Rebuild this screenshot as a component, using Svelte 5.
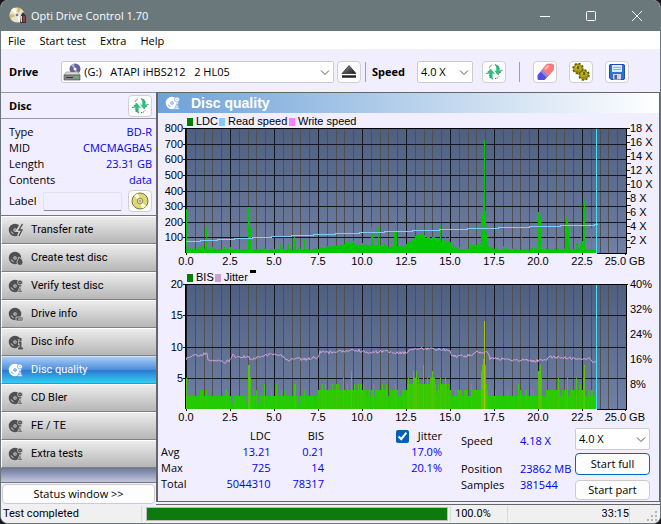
<script lang="ts">
  type Spike = [number, number];

  const menu = ['File', 'Start test', 'Extra', 'Help'];

  const info = [
    ['Type', 'BD-R'],
    ['MID', 'CMCMAGBA5'],
    ['Length', '23.31 GB'],
    ['Contents', 'data'],
  ];

  const tests = [
    { name: 'Transfer rate', badge: 'bolt' },
    { name: 'Create test disc', badge: 'flame' },
    { name: 'Verify test disc', badge: 'search' },
    { name: 'Drive info', badge: 'drive' },
    { name: 'Disc info', badge: 'info' },
    { name: 'Disc quality', badge: 'search' },
    { name: 'CD Bler', badge: 'search' },
    { name: 'FE / TE', badge: 'search' },
    { name: 'Extra tests', badge: 'search' },
  ];

  let active = $state('Disc quality');
  let jitterOn = $state(true);

  // plot area inside each chart's viewBox
  const LEFT = 28;
  const TOP = 15;
  const W = 441;
  const H = 125;
  const END = 411;

  function noise(i: number) {
    const n = Math.sin(i * 127.1 + 11.7) * 43758.5453;
    return n - Math.floor(n);
  }

  function lerp(points: Spike[], x: number) {
    for (let i = 1; i < points.length; i++) {
      const [x0, y0] = points[i - 1];
      const [x1, y1] = points[i];
      if (x <= x1) return y0 + ((y1 - y0) * (x - x0)) / (x1 - x0);
    }
    return points[points.length - 1][1];
  }

  const ldcBase: Spike[] = [
    [0, 3], [132, 3], [136, 5], [150, 6], [162, 9], [175, 7], [200, 6], [218, 6], [228, 13], [234, 16],
    [240, 13], [250, 13], [254, 10], [263, 10], [268, 5], [274, 3], [283, 3], [286, 7], [301, 7], [307, 3], [411, 3],
  ];
  const ldcSpikes: Spike[] = [
    [0, 44], [15, 7], [16, 7], [20, 26], [26, 6], [62, 46], [63, 46], [64, 26], [94, 9], [102, 9], [108, 16],
    [109, 12], [118, 14], [163, 14], [185, 26], [186, 20], [192, 26], [208, 22], [209, 34], [210, 22], [221, 14],
    [254, 28], [259, 27], [263, 28], [284, 10], [295, 38], [296, 40], [297, 61], [298, 113], [299, 42], [300, 20],
    [335, 26], [352, 41], [353, 41], [354, 36], [369, 25], [379, 20], [380, 35], [381, 33], [382, 25], [383, 11],
    [390, 10], [391, 13], [394, 8], [395, 26], [396, 12], [397, 38], [398, 52], [405, 25], [410, 5],
  ];
  const bisSpikes: Spike[] = [
    [0, 5], [14, 3], [16, 3], [20, 3], [39, 3], [40, 3], [62, 7], [63, 7], [64, 5], [67, 3], [70, 3], [78, 4],
    [85, 3], [90, 4], [95, 3], [98, 3], [108, 4], [109, 4], [118, 3], [146, 4], [150, 4], [157, 5], [161, 4],
    [165, 6], [168, 4], [172, 4], [175, 4], [187, 4], [196, 4], [200, 4], [209, 4], [222, 5], [227, 6], [230, 6],
    [237, 7], [246, 6], [259, 5], [262, 4], [285, 4], [295, 6], [296, 7], [297, 8], [298, 14], [299, 7], [300, 4],
    [305, 3], [332, 4], [340, 3], [352, 6], [353, 6], [354, 7], [355, 5], [372, 5], [379, 4], [381, 5], [390, 5],
    [394, 4], [397, 5], [398, 7], [405, 3], [410, 3],
  ];
  const jitterPoints: Spike[] = [
    [0, 292], [8, 277], [13, 284], [19, 274], [21, 274], [22, 292], [25, 299], [30, 295], [40, 300], [45, 293],
    [47, 280], [52, 287], [60, 283], [66, 292], [72, 283], [80, 280], [88, 276], [97, 282], [101, 294], [108, 290],
    [118, 292], [132, 286], [134, 270], [145, 271], [155, 268], [166, 262], [174, 266], [180, 272], [190, 270],
    [200, 268], [210, 271], [220, 273], [228, 260], [250, 260], [263, 265], [267, 282], [285, 281], [289, 270],
    [302, 272], [304, 288], [320, 292], [350, 297], [360, 292], [364, 285], [390, 289], [404, 290], [407, 301], [410, 298],
  ];

  const ldc = Array.from({ length: END }, (_, i) => {
    const base = lerp(ldcBase, i);
    const r = noise(i);
    return Math.round(base + r * (base > 8 ? 4 : 1.6) + (noise(i + 900) > 0.93 ? 2 : 0));
  });
  for (const [x, h] of ldcSpikes) ldc[x] = h;

  function bisLevel(i: number) {
    const r = noise(i + 300);
    if (i < 132) return r > 0.94 && i > 40 ? 1 : 2;
    if (i < 180) return r > 0.85 ? 4 : 3;
    if (i < 221) return r > 0.4 ? 3 : 2;
    if (i < 226) return 4;
    if (i < 249) return r > 0.55 ? 5 : 4;
    if (i < 264) return r > 0.8 ? 5 : r > 0.4 ? 4 : 3;
    if (i < 285) return r > 0.6 ? 3 : 2;
    if (i < 302) return 3;
    if (i < 360) return r > 0.86 ? 3 : 2;
    if (i < 374) return 3;
    return r > 0.5 ? 3 : 2;
  }
  const bis = Array.from({ length: END }, (_, i) => bisLevel(i));
  for (const [x, h] of bisSpikes) bis[x] = h;

  const bars = (values: number[]) =>
    values.map((h, i) => `M${LEFT + i} ${TOP + H}v${-h}h1v${h}z`).join('');

  function bisColor(level: number) {
    if (level > 10) return '#aebe00';
    return `rgb(${12 + level * 11}, ${205 - level}, 4)`;
  }
  const bisLevels = [...new Set(bis)].map((level) => ({
    level,
    d: bis
      .map((v, i) => (v === level ? `M${LEFT + i} ${TOP + H}v${-Math.round(v * 6.25)}h1v${Math.round(v * 6.25)}z` : ''))
      .join(''),
  }));

  const jitter = Array.from({ length: END }, (_, i) => {
    const y = (lerp(jitterPoints, i) - 66) / 3 + TOP + (noise(i * 3) - 0.5) * 3;
    return `${i ? 'L' : 'M'}${LEFT + i} ${y.toFixed(1)}`;
  }).join('');

  // read speed climbs one pixel at each of these offsets
  const steps = [14, 31, 48, 66, 85, 105, 127, 149, 173, 198, 226, 253, 281, 312, 343, 374, 408, 411];
  const readSpeed = `M${LEFT} 128.5` + steps.map((x) => `H${LEFT + x}v-1`).join('');

  const xLabels = ['0.0', '2.5', '5.0', '7.5', '10.0', '12.5', '15.0', '17.5', '20.0', '22.5'];
  const minor = Array.from({ length: 50 }, (_, i) => i).filter((i) => i % 5);
  const major = Array.from({ length: 10 }, (_, i) => i);
</script>

{#snippet disc(badge: string)}
  <svg class="disc" width="16" height="16" viewBox="0 0 16 16" fill="none" stroke="currentColor">
    <circle cx="7" cy="8" r="4" stroke-width="4.500" />
    <circle cx="7" cy="8" r=".8" fill="currentColor" stroke="none" />
    <path d="M3.2 9.500A4 4 0 0 0 5.600 11.800" class="shine" />
    {#if badge === 'bolt'}
      <path d="M14 2l-3.500 6h3l-2.500 6" class="cut" stroke-width="4" />
      <path d="M14.500 2l-3.500 6h3l-3 6" stroke-width="1.400" />
    {:else if badge === 'flame'}
      <path d="M11 7c3 2 4 3.500 4 5.500a3 3 0 0 1-6 0c0-2 1-2.500 2-5.500z" fill="currentColor" class="edge" />
    {:else if badge === 'drive'}
      <path d="M8 11h7v4H8z" class="edge" fill="currentColor" />
      <path d="M10 13h4" class="shine" />
    {:else if badge === 'info'}
      <path d="M10 9h3v5h2M9.500 14.500H15M12.500 5v2" class="cut" stroke-width="4" />
      <path d="M10.500 8.500h2v6M10 14.500h5M12.500 4v3" stroke-width="2" />
    {:else}
      <circle cx="12" cy="4.500" r="2.500" fill="currentColor" class="edge" />
      <path d="M9.500 14.500l2.500-6 2.500 6z" fill="currentColor" class="edge" />
      <path d="M12 4v1M12 11.500v2" class="shine" />
    {/if}
  </svg>
{/snippet}

{#snippet refresh()}
  <svg width="18" height="18" viewBox="0 0 18 18">
    <path d="M6 6l4 5-2.500-.5Q7 14 8.500 16.500 4.500 15 4.500 10.500L1.500 11z" fill="#2fc07c" />
    <path d="M13 12l-4-4.500 2.500.5Q12 4 9.500 1.500 14.500 2.500 14.500 7.500L17 7z" fill="#2fc07c" />
    <path d="M5.500 7v8M12.500 2.500V11" stroke="#2fc07c" stroke-width="2" />
    <path d="M1 11l5-5.500M5 12q.5 3 3 4.500M10 1.500q4 1 4.500 5.500M17.500 7L13 12" fill="none" stroke="#3b5f50" stroke-width=".8" stroke-dasharray="1.500 1" />
    <path d="M4.500 4.500q.5-2 3-2.500M10 15.500q3 0 4-2" fill="none" stroke="#333" stroke-dasharray="1 1" />
  </svg>
{/snippet}

{#snippet chevron()}
  <svg class="chevron" width="10" height="6" viewBox="0 0 10 6" fill="none" stroke="#555">
    <path d="M1 .5l4 4 4-4" />
  </svg>
{/snippet}

{#snippet grid(rows: number)}
  <rect x={LEFT} y={TOP} width={W} height={H} fill="url(#sky)" />
  <g shape-rendering="crispEdges">
    {#each minor as i}
      <rect x={LEFT + Math.round(i * 8.8)} y={TOP} width="1" height={H} fill="#505050" />
    {/each}
    {#each major as i}
      <rect x={LEFT + i * 44} y={TOP} width="1" height={H} fill="#15171c" />
    {/each}
    {#each Array(rows) as _, i}
      <rect x={LEFT - 3} y={TOP + Math.round((i * H) / rows)} width={i ? W + 3 : 3} height="1" fill="#15171c" />
    {/each}
  </g>
{/snippet}

{#snippet frame()}
  <g shape-rendering="crispEdges">
    <rect x={LEFT + 410} y={TOP} width="1" height={H} fill="#40e0ff" />
    <path d="M27.500 140V15M27 15.500H470M468.500 15V141M439 140.500H469" fill="none" stroke="#000" />
    {#each [...major, 10] as i}
      <rect x={LEFT + i * 44 - (i === 10 ? 1 : 0)} y={TOP + H} width="1" height="2" fill="#000" />
    {/each}
  </g>
  {#each xLabels as label, i}
    <text x={LEFT + i * 44} y="152" text-anchor="middle">{label}</text>
  {/each}
  <text x="487" y="152" text-anchor="end">25.0 GB</text>
{/snippet}

<div class="window">
  <header class="titlebar">
    <svg width="18" height="18" viewBox="0 0 18 18">
      <circle cx="8" cy="8" r="7.500" fill="#e9e1c8" />
      <path d="M8 8L2 3a8 8 0 0 1 4-2.500zM8 8l6 5a8 8 0 0 1-4 2.500z" fill="#fffdf2" />
      <path d="M8 8L.5 7a8 8 0 0 0 1 4.500z" fill="#d6bc6e" />
      <path d="M8 8l1-7.500 3 1.200z" fill="#d2b46a" />
      <circle cx="8" cy="8" r="2" fill="#777" stroke="#fff" />
      <path d="M11 16l1-8 2-3 3 4v7z" fill="#343238" />
      <path d="M15 9v6" stroke="#a33b36" stroke-width="2" />
      <path d="M12.500 9v6" stroke="#ddd" />
    </svg>
    <h1>Opti Drive Control 1.70</h1>
    <div class="caption">
      <button aria-label="Minimize"><svg width="12" height="12" viewBox="0 0 12 12"><path d="M1 6.500h10" /></svg></button>
      <button aria-label="Maximize"><svg width="12" height="12" viewBox="0 0 12 12"><rect x="1.500" y="1.500" width="9" height="9" rx="1" /></svg></button>
      <button aria-label="Close"><svg width="12" height="12" viewBox="0 0 12 12"><path d="M1 1l10 10M11 1L1 11" /></svg></button>
    </div>
  </header>

  <nav class="menu">
    {#each menu as item}
      <button>{item}</button>
    {/each}
  </nav>

  <div class="toolbar">
    <label class="strong" for="drive">Drive</label>
    <span class="combo drive">
      <svg class="drive-icon" width="18" height="18" viewBox="0 0 18 18">
        <circle cx="12" cy="6" r="5.500" fill="#66609a" />
        <path d="M12 6l-4-3.500A5.500 5.500 0 0 1 11 .6zM12 6l4 4a5.500 5.500 0 0 1-3 1.400z" fill="#b6b0e4" />
        <circle cx="12" cy="6" r="1.500" fill="#fff" />
        <path d="M3 9h12l2 3H1z" fill="#dcdcdc" stroke="#777" stroke-width=".5" />
        <path d="M1 12h16v5H1z" fill="#8b8b8b" stroke="#444" stroke-width=".6" />
        <path d="M3 14.500h7" stroke="#333" />
        <path d="M12 14h3" stroke="#2edc3c" stroke-width="2" />
      </svg>
      <select id="drive"><option>(G:)&nbsp;&nbsp; ATAPI iHBS212&nbsp;&nbsp; 2 HL05</option></select>
      {@render chevron()}
    </span>
    <button class="tool eject" aria-label="Eject">
      <svg width="18" height="16" viewBox="0 0 18 16">
        <defs><linearGradient id="metal" x2="1" y2="1"><stop stop-color="#999" /><stop offset="1" stop-color="#111" /></linearGradient></defs>
        <path d="M9 1.500L16 9.500H2z" fill="url(#metal)" stroke="#222" stroke-width=".7" />
        <path d="M2 12.500h14" stroke="#222" stroke-width="2.500" />
      </svg>
    </button>
    <span class="sep"></span>
    <label class="strong" for="speed">Speed</label>
    <span class="combo speed">
      <select id="speed"><option>4.0 X</option></select>
      {@render chevron()}
    </span>
    <button class="tool" aria-label="Refresh">{@render refresh()}</button>
    <span class="sep wide"></span>
    <div class="group">
      <button class="tool" aria-label="Erase">
        <svg width="18" height="18" viewBox="0 0 18 18">
          <path d="M6 7l4.500-5.500q.5-.5 1.500-.5h4q1.500 0 1.500 1.500V6q0 1-.5 1.500L12 13z" fill="#ff7b7b" stroke="#b86a6a" stroke-width=".6" />
          <path d="M6 7l6 6-3 3.500q-.5.500-1.500.5H3q-1.500 0-1.500-1.500V13q0-1 .5-1.500z" fill="#554ce0" />
          <path d="M6 7l6 6-1.500 1.500-6-6z" fill="#8f88f0" />
          <path d="M9 6.500l3.500-4" stroke="#ffb4b4" stroke-width="2" />
        </svg>
      </button>
      <button class="tool" aria-label="Options">
        <svg width="18" height="18" viewBox="0 0 18 18" fill="none">
          <circle cx="6" cy="5.500" r="4.500" stroke="#5e5a05" stroke-width="2.500" stroke-dasharray="2 1.500" />
          <circle cx="12" cy="12" r="4.500" stroke="#5e5a05" stroke-width="2.500" stroke-dasharray="2 1.500" />
          <circle cx="6" cy="5.500" r="4.300" fill="#b5a90c" stroke="#6f6906" stroke-width=".8" />
          <circle cx="12" cy="12" r="4.300" fill="#b5a90c" stroke="#6f6906" stroke-width=".8" />
          <path d="M3.500 4.500Q4.500 3 6.500 3M9.500 11q1-1.500 3-1.500" stroke="#e0d648" />
          <path d="M6 3v3M12 9v3" stroke="#4a4600" stroke-width="1.500" />
          <path d="M4 8q2 1 4-.5M10.500 14.500q2 .5 4-1" stroke="#857d06" />
        </svg>
      </button>
      <button class="tool" aria-label="Save">
        <svg width="18" height="18" viewBox="0 0 18 18">
          <path d="M2 1.500h14l.5.5v14l-.5.500H3L1.500 15V2z" fill="#2f6fe0" stroke="#1c4faf" />
          <path d="M4 2h10v7H4z" fill="#dfeaff" />
          <path d="M5 4.500h8M5 6.500h8" stroke="#8fb0e8" />
          <path d="M5 11h8v5.500H5z" fill="#d6d6d6" />
          <path d="M6.500 12H9v4H6.500z" fill="#555f75" />
        </svg>
      </button>
    </div>
  </div>

  <div class="body">
    <aside>
      <div class="disc-head">
        <h2>Disc</h2>
        <button class="tool" aria-label="Reload disc">{@render refresh()}</button>
      </div>
      <dl class="info">
        {#each info as [key, value]}
          <div><dt>{key}</dt><dd>{value}</dd></div>
        {/each}
      </dl>
      <div class="disc-label">
        <label for="label">Label</label>
        <input id="label" type="text" />
        <button class="tool" aria-label="Write label">
          <svg width="18" height="18" viewBox="0 0 18 18">
            <circle cx="9" cy="9" r="8" fill="#e0d878" stroke="#76733c" />
            <path d="M9 9L3 4a8 8 0 0 1 4-2.500zM9 9l6 5a8 8 0 0 1-4 2.500z" fill="#fdfbd8" />
            <circle cx="9" cy="9" r="2.800" fill="#f2efbf" stroke="#8c894c" />
            <circle cx="9" cy="9" r="1" fill="#fff" stroke="#555" stroke-width=".6" />
          </svg>
        </button>
      </div>
      <nav class="tests">
        {#each tests as test}
          <button class:active={active === test.name} onclick={() => (active = test.name)}>
            {@render disc(test.badge)}
            {test.name}
          </button>
        {/each}
      </nav>
      <div class="filler"></div>
      <button class="push status-toggle">Status window &gt;&gt;</button>
    </aside>

    <main>
      <div class="panel">
        <div class="panel-head">
          {@render disc('search')}
          <h2>Disc quality</h2>
        </div>

        <svg class="chart" viewBox="0 0 501 156" role="img" aria-label="LDC and read speed">
          <defs>
            <linearGradient id="sky" x2="0" y2="1">
              <stop stop-color="#4f5f80" />
              <stop offset="1" stop-color="#7080a4" />
            </linearGradient>
          </defs>
          {@render grid(8)}
          <path d={bars(ldc)} fill="#00c800" shape-rendering="crispEdges" />
          <path d={readSpeed} fill="none" stroke="#80ccff" shape-rendering="crispEdges" />
          {@render frame()}
          {#each Array(8) as _, i}
            <text x="25" y={19 + Math.round(i * 15.625)} text-anchor="end">{800 - i * 100}</text>
          {/each}
          {#each Array(9) as _, i}
            <text x="472" y={19 + i * 14}>{18 - i * 2} X</text>
          {/each}
          {#each Array(18) as _, i}
            <rect x="469" y={15 + i * 7} width={i % 2 ? 4 : 3} height="1" fill="#222" shape-rendering="crispEdges" />
          {/each}
          <rect x="29" y="5" width="6" height="8" fill="#008000" />
          <text x="38" y="12">LDC</text>
          <rect x="61" y="5" width="6" height="8" fill="#80ccff" />
          <text x="70" y="12">Read speed</text>
          <rect x="131" y="5" width="6" height="8" fill="#ff80ff" />
          <text x="140" y="12">Write speed</text>
        </svg>

        <svg class="chart" viewBox="0 0 501 156" role="img" aria-label="BIS and jitter">
          {@render grid(4)}
          {#each bisLevels as { level, d }}
            <path {d} fill={bisColor(level)} shape-rendering="crispEdges" />
          {/each}
          {#if jitterOn}
            <path d={jitter} fill="none" stroke="#d0a0d0" />
          {/if}
          {@render frame()}
          {#each Array(4) as _, i}
            <text x="25" y={19 + Math.round(i * 31.25)} text-anchor="end">{20 - i * 5}</text>
          {/each}
          {#each Array(5) as _, i}
            <text x="472" y={19 + i * 25}>{40 - i * 8}%</text>
          {/each}
          <rect x="29" y="5" width="6" height="8" fill="#008000" />
          <text x="38" y="12">BIS</text>
          <rect x="57" y="5" width="6" height="8" fill="#d0a0d0" />
          <text x="66" y="12">Jitter</text>
          <rect x="92" y="1" width="6" height="3" fill="#000" />
        </svg>

        <div class="results">
          <table>
            <thead>
              <tr>
                <td></td>
                <th>LDC</th>
                <th>BIS</th>
                <th><label><input type="checkbox" bind:checked={jitterOn} />Jitter</label></th>
              </tr>
            </thead>
            <tbody>
              <tr><th>Avg</th><td>13.21</td><td>0.21</td><td>17.0%</td></tr>
              <tr><th>Max</th><td>725</td><td>14</td><td>20.1%</td></tr>
              <tr><th>Total</th><td>5044310</td><td>78317</td><td></td></tr>
            </tbody>
          </table>
          <dl class="position">
            <dt class="first">Speed</dt><dd class="first">4.18 X</dd>
            <dt>Position</dt><dd>23862 MB</dd>
            <dt>Samples</dt><dd>381544</dd>
          </dl>
          <div class="actions">
            <span class="combo">
              <select aria-label="Test speed"><option>4.0 X</option></select>
              {@render chevron()}
            </span>
            <button class="push default">Start full</button>
            <button class="push">Start part</button>
          </div>
        </div>
      </div>
    </main>
  </div>

  <footer>
    <span class="message">Test completed</span>
    <progress max="100" value="100" aria-label="Progress"></progress>
    <span class="percent">100.0%</span>
    <span class="time">33:15</span>
    <svg class="grip" width="10" height="10" viewBox="0 0 10 10" fill="#b4b4b4">
      <path d="M8 0h2v2H8zM4 4h2v2H4zM8 4h2v2H8zM0 8h2v2H0zM4 8h2v2H4zM8 8h2v2H8z" />
    </svg>
  </footer>
</div>

<style>
  :global(body) {
    background: #15171a;
  }

  .window {
    min-height: 100vh;
    box-sizing: border-box;
    display: flex;
    flex-direction: column;
    border: 1px solid #6a787c;
    border-top: 0;
    border-radius: 8px;
    overflow: hidden;
    background: #f0eeff;
    color: #000;
    font: 11px/16px "Open Sans", "Noto Sans", sans-serif;
  }

  button, select, input {
    font: inherit;
    color: inherit;
  }

  button {
    padding: 0;
    border: 0;
    background: none;
  }

  h1, h2, dl, dd {
    margin: 0;
    font-size: inherit;
  }

  .titlebar {
    height: 31px;
    display: flex;
    align-items: center;
    gap: 4px;
    padding-left: 8px;
    background: #6a787c;
    color: #fff;
  }

  h1 {
    flex: 1;
    font-weight: 400;
  }

  .caption {
    display: flex;
  }

  .caption button {
    width: 46px;
    height: 31px;
    display: grid;
    place-items: center;
  }

  .caption svg {
    fill: none;
    stroke: #fff;
  }

  .menu {
    height: 19px;
    box-sizing: border-box;
    display: flex;
    align-items: center;
    gap: 14px;
    padding: 2px 0 0 7px;
    background: #fff;
    border-bottom: 1px solid #f0f0f0;
  }

  .toolbar {
    height: 42px;
    display: flex;
    align-items: center;
    padding: 2px 31px 0 8px;
    box-sizing: border-box;
  }

  .strong, .disc-head h2 {
    font-weight: 700;
  }

  .combo {
    position: relative;
    display: block;
  }

  .combo select {
    appearance: none;
    width: 100%;
    height: 22px;
    display: block;
    padding: 0 20px 0 3px;
    border: 1px solid #ccc;
    border-radius: 2px;
    background: #fff;
  }

  .chevron {
    position: absolute;
    right: 4px;
    top: 9px;
    pointer-events: none;
  }

  .drive {
    flex: 1;
    margin-left: 23px;
  }

  .drive select {
    padding-left: 22px;
  }

  .drive-icon {
    position: absolute;
    left: 2px;
    top: 2px;
  }

  .speed {
    width: 56px;
    margin: 0 9px 0 12px;
  }

  .tool {
    flex: none;
    width: 24px;
    height: 22px;
    display: grid;
    place-items: center;
    border: 1px solid #d0d0d0;
    border-radius: 4px;
    background: #fdfdfd;
  }

  .eject {
    margin-left: 3px;
  }

  .sep {
    width: 1px;
    height: 20px;
    margin: 0 6px 0 4px;
    background: #a0a0a0;
  }

  .sep.wide {
    margin: 0 13px;
  }

  .group {
    display: flex;
    gap: 12px;
  }

  .body {
    flex: 1;
    display: flex;
  }

  aside {
    flex: none;
    width: 155px;
    display: flex;
    flex-direction: column;
    border-top: 1px solid #999;
  }

  .disc-head {
    height: 25px;
    display: flex;
    align-items: center;
    justify-content: space-between;
    padding: 0 4px 0 8px;
    border-bottom: 1px solid #999;
  }

  .info {
    padding: 5px 4px 2px 8px;
  }

  .info div {
    display: flex;
    justify-content: space-between;
  }

  dd {
    color: #0000f0;
  }

  .disc-label {
    display: flex;
    align-items: center;
    padding: 0 4px 3px 8px;
    border-bottom: 1px solid #777;
  }

  .disc-label input {
    flex: 1;
    min-width: 0;
    box-sizing: border-box;
    height: 19px;
    margin: 0 6px;
    border: 1px solid #e0e0e8;
    border-bottom-color: #888;
    border-radius: 2px;
    background: #f0eeff;
  }

  .tests button {
    width: 100%;
    height: 28px;
    box-sizing: border-box;
    display: flex;
    align-items: center;
    gap: 7px;
    padding-left: 6px;
    border-top: 1px solid #fff;
    border-bottom: 1px solid #808080;
    border-left: 1px solid #fff;
    background: linear-gradient(#ececec, #b6b6b6);
    font-family: Roboto, sans-serif;
    --cut: #d4d4d4;
  }

  .disc {
    color: #505050;
  }

  .shine {
    stroke: var(--cut);
    stroke-width: 1;
  }

  .cut {
    stroke: var(--cut);
  }

  .edge {
    stroke: var(--cut);
    stroke-width: 0.8;
  }

  .tests .active {
    color: #fff;
    background: linear-gradient(#a8ccf4, #4a8cdc 50%, #2f78d0 51%, #30d0f8);
    border-top-color: #cfe4fa;
    --cut: #6a9fe0;
  }

  .tests .active .disc {
    color: #fff;
  }

  .filler {
    flex: 1;
    min-height: 12px;
    border-bottom: 1px solid #777;
    background: linear-gradient(#6a7899, #c2c6dc);
  }

  .push {
    height: 22px;
    border: 1px solid #ccc;
    border-radius: 4px;
    background: #fdfdfd;
  }

  .status-toggle {
    height: 20px;
    margin: 1px;
  }

  main {
    flex: 1;
    min-width: 0;
    border-bottom: 1px solid #666;
    padding-bottom: 2px;
    display: flex;
  }

  .panel {
    flex: 1;
    min-width: 0;
    border: solid #666;
    border-width: 1px 1px 1px 2px;
  }

  .panel-head {
    height: 20px;
    display: flex;
    align-items: center;
    gap: 10px;
    padding-left: 7px;
    color: #fff;
    background: linear-gradient(90deg, #6ea2d8, #fff);
    --cut: #7aabdc;
  }

  .panel-head h2 {
    font: bold 14px/20px "Liberation Sans", Arial, sans-serif;
  }

  .panel-head .disc {
    color: #fff;
  }

  .chart {
    display: block;
    width: 100%;
    height: auto;
    font: 11px "Liberation Sans", Arial, sans-serif;
  }

  .results {
    display: flex;
    padding: 3px 9px 0 3px;
  }

  table {
    flex: 1;
    table-layout: fixed;
    border-collapse: collapse;
    height: 64px;
    text-align: right;
  }

  th, td {
    padding: 0;
    font-weight: 400;
  }

  tbody th {
    text-align: left;
  }

  thead td {
    width: 20%;
  }

  thead th {
    width: 19%;
  }

  thead th:last-child {
    width: 42%;
  }

  tbody td {
    color: #0000f0;
  }

  table label {
    display: flex;
    align-items: center;
    justify-content: flex-end;
    gap: 9px;
  }

  table input {
    width: 13px;
    height: 13px;
    margin: 0;
    accent-color: #005fb8;
  }

  .position {
    flex: none;
    width: 114px;
    display: grid;
    grid-template-columns: 59px 1fr;
    align-content: start;
    padding: 5px 0 0 19px;
    white-space: nowrap;
  }

  .position .first {
    margin-bottom: 12px;
  }

  .actions {
    flex: none;
    width: 75px;
    display: grid;
    gap: 3px;
    align-content: start;
  }

  .actions .push:last-child {
    margin-top: 2px;
    height: 20px;
  }

  .push.default {
    border-color: #0067c0;
  }

  footer {
    height: 18px;
    display: flex;
    align-items: center;
    background: #f0f0f0;
    padding: 0 3px 0 2px;
    font-family: Roboto, sans-serif;
  }

  .message {
    width: 138px;
    border-right: 1px solid #d8d8d8;
    margin-right: 4px;
  }

  progress {
    appearance: none;
    flex: 1;
    height: 14px;
    border: 1px solid #bbb;
    background: #e6e6e6;
  }

  progress::-webkit-progress-bar {
    background: #e6e6e6;
  }

  progress::-webkit-progress-value {
    background: #0e7a0e;
  }

  .percent {
    width: 52px;
    margin-left: 2px;
    padding-left: 4px;
    border-left: 1px solid #d8d8d8;
    border-right: 1px solid #d8d8d8;
  }

  .time {
    width: 121px;
    text-align: right;
    border-right: 1px solid #d8d8d8;
  }

  .grip {
    margin: 4px 0 0 17px;
  }
</style>
